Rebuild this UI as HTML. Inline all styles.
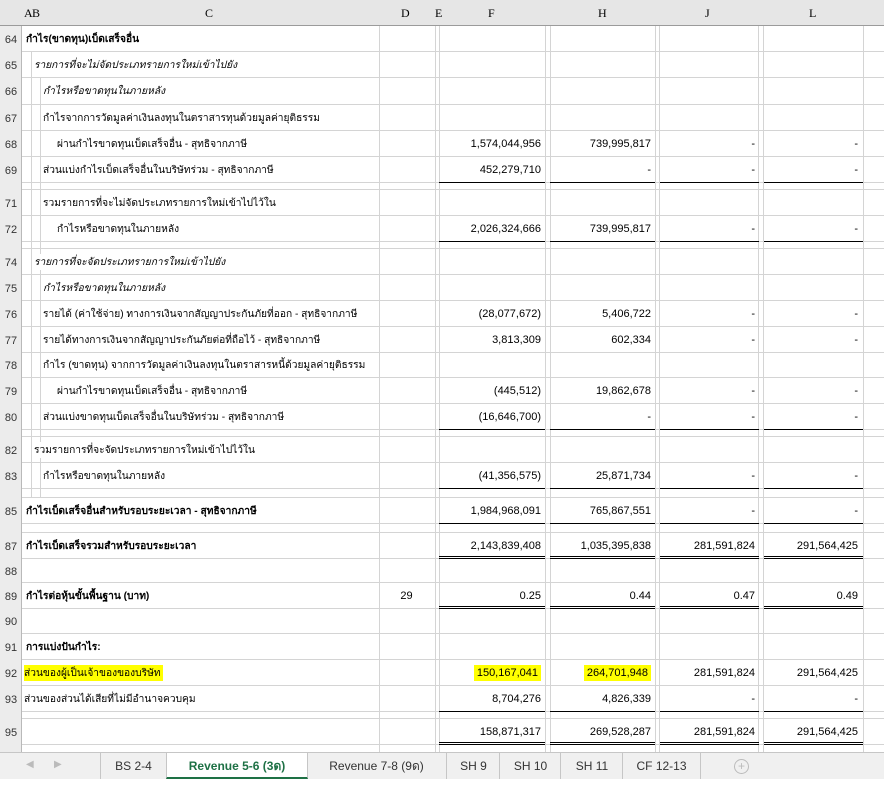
<!DOCTYPE html>
<html><head><meta charset="utf-8"><style>
body{margin:0;width:884px;height:790px;overflow:hidden;background:#fff;font-family:"Liberation Sans",Tahoma,sans-serif;font-size:11px;color:#000;position:relative}
.a{position:absolute}
.hdr{left:0;top:0;width:884px;height:25px;background:#e6e6e6;border-bottom:1px solid #9b9b9b;font-family:"Liberation Serif",serif;font-size:12px}
.hdr span{position:absolute;top:6px}
.rn{left:0;top:26px;width:21px;height:726px;background:#ececec;border-right:1px solid #b9b9b9}
.vl{position:absolute;top:26px;width:1px;background:#d4d4d4}
.r{position:absolute;left:22px;width:862px;border-bottom:1px solid #d4d4d4;box-sizing:border-box}
.n{position:absolute;left:-22px;width:22px;text-align:center;color:#333;font-size:11px;top:50%;margin-top:-5px}
.t{position:absolute;top:50%;margin-top:-8px;white-space:nowrap;background:#fff;padding-right:2px;font-size:10.2px}
.b{font-weight:bold}.i{font-style:italic}
.v{position:absolute;top:50%;margin-top:-6px;text-align:right;font-size:11px}
.F{left:417px;width:102px}.H{left:528px;width:101px}.J{left:638px;width:95px}.L{left:741px;width:95px}.D{left:357px;width:55px;text-align:center}
.u{position:absolute;bottom:-1px;height:0;border-bottom:1px solid #000}
.d{position:absolute;bottom:-1px;height:1px;border-top:1px solid #000;border-bottom:1px solid #000}
.uF{left:417px;width:106px}.uH{left:528px;width:105px}.uJ{left:638px;width:99px}.uL{left:742px;width:99px}
.hl{background:#ffff00}
.tabs{left:0;top:752px;width:884px;height:26px;background:#f0f0f0;border-top:1px solid #c6c6c6}
.tab{position:absolute;top:0;height:26px;line-height:26px;text-align:center;font-size:12px;color:#333;border-left:1px solid #c6c6c6}
</style></head><body>
<div class="a hdr">
<span style="left:24px">A</span><span style="left:32px">B</span><span style="left:205px">C</span><span style="left:401px">D</span><span style="left:435px">E</span><span style="left:488px">F</span><span style="left:598px">H</span><span style="left:705px">J</span><span style="left:809px">L</span>
</div>
<div class="a rn"></div>
<div class="vl" style="left:379px;height:726px"></div>
<div class="vl" style="left:435px;height:726px"></div>
<div class="vl" style="left:439px;height:726px"></div>
<div class="vl" style="left:545px;height:726px"></div>
<div class="vl" style="left:550px;height:726px"></div>
<div class="vl" style="left:655px;height:726px"></div>
<div class="vl" style="left:659px;height:726px"></div>
<div class="vl" style="left:758px;height:726px"></div>
<div class="vl" style="left:763px;height:726px"></div>
<div class="vl" style="left:863px;height:726px"></div>
<div class="vl" style="left:31px;top:52px;height:446px"></div>
<div class="vl" style="left:40px;top:78px;height:420px"></div>

<div class="r" style="top:26px;height:26px"><span class="n">64</span><span class="t b" style="left:4px">กำไร(ขาดทุน)เบ็ดเสร็จอื่น</span></div>
<div class="r" style="top:52px;height:26px"><span class="n">65</span><span class="t i" style="left:12px">รายการที่จะไม่จัดประเภทรายการใหม่เข้าไปยัง</span></div>
<div class="r" style="top:78px;height:27px"><span class="n">66</span><span class="t i" style="left:21px">กำไรหรือขาดทุนในภายหลัง</span></div>
<div class="r" style="top:105px;height:26px"><span class="n">67</span><span class="t" style="left:21px">กำไรจากการวัดมูลค่าเงินลงทุนในตราสารทุนด้วยมูลค่ายุติธรรม</span></div>
<div class="r" style="top:131px;height:26px"><span class="n">68</span><span class="t" style="left:35px">ผ่านกำไรขาดทุนเบ็ดเสร็จอื่น - สุทธิจากภาษี</span><span class="v F">1,574,044,956</span><span class="v H">739,995,817</span><span class="v J">-</span><span class="v L">-</span></div>
<div class="r" style="top:157px;height:26px"><span class="n">69</span><span class="t" style="left:21px">ส่วนแบ่งกำไรเบ็ดเสร็จอื่นในบริษัทร่วม - สุทธิจากภาษี</span><span class="v F">452,279,710</span><span class="v H">-</span><span class="v J">-</span><span class="v L">-</span><i class="u uF"></i><i class="u uH"></i><i class="u uJ"></i><i class="u uL"></i></div>
<div class="r" style="top:183px;height:7px"></div>
<div class="r" style="top:190px;height:26px"><span class="n">71</span><span class="t" style="left:21px">รวมรายการที่จะไม่จัดประเภทรายการใหม่เข้าไปไว้ใน</span></div>
<div class="r" style="top:216px;height:26px"><span class="n">72</span><span class="t" style="left:35px">กำไรหรือขาดทุนในภายหลัง</span><span class="v F">2,026,324,666</span><span class="v H">739,995,817</span><span class="v J">-</span><span class="v L">-</span><i class="u uF"></i><i class="u uH"></i><i class="u uJ"></i><i class="u uL"></i></div>
<div class="r" style="top:242px;height:7px"></div>
<div class="r" style="top:249px;height:26px"><span class="n">74</span><span class="t i" style="left:12px">รายการที่จะจัดประเภทรายการใหม่เข้าไปยัง</span></div>
<div class="r" style="top:275px;height:26px"><span class="n">75</span><span class="t i" style="left:21px">กำไรหรือขาดทุนในภายหลัง</span></div>
<div class="r" style="top:301px;height:26px"><span class="n">76</span><span class="t" style="left:21px">รายได้ (ค่าใช้จ่าย) ทางการเงินจากสัญญาประกันภัยที่ออก - สุทธิจากภาษี</span><span class="v F">(28,077,672)</span><span class="v H">5,406,722</span><span class="v J">-</span><span class="v L">-</span></div>
<div class="r" style="top:327px;height:26px"><span class="n">77</span><span class="t" style="left:21px">รายได้ทางการเงินจากสัญญาประกันภัยต่อที่ถือไว้ - สุทธิจากภาษี</span><span class="v F">3,813,309</span><span class="v H">602,334</span><span class="v J">-</span><span class="v L">-</span></div>
<div class="r" style="top:353px;height:25px"><span class="n">78</span><span class="t" style="left:21px">กำไร (ขาดทุน) จากการวัดมูลค่าเงินลงทุนในตราสารหนี้ด้วยมูลค่ายุติธรรม</span></div>
<div class="r" style="top:378px;height:26px"><span class="n">79</span><span class="t" style="left:35px">ผ่านกำไรขาดทุนเบ็ดเสร็จอื่น - สุทธิจากภาษี</span><span class="v F">(445,512)</span><span class="v H">19,862,678</span><span class="v J">-</span><span class="v L">-</span></div>
<div class="r" style="top:404px;height:26px"><span class="n">80</span><span class="t" style="left:21px">ส่วนแบ่งขาดทุนเบ็ดเสร็จอื่นในบริษัทร่วม - สุทธิจากภาษี</span><span class="v F">(16,646,700)</span><span class="v H">-</span><span class="v J">-</span><span class="v L">-</span><i class="u uF"></i><i class="u uH"></i><i class="u uJ"></i><i class="u uL"></i></div>
<div class="r" style="top:430px;height:7px"></div>
<div class="r" style="top:437px;height:26px"><span class="n">82</span><span class="t" style="left:12px">รวมรายการที่จะจัดประเภทรายการใหม่เข้าไปไว้ใน</span></div>
<div class="r" style="top:463px;height:26px"><span class="n">83</span><span class="t" style="left:21px">กำไรหรือขาดทุนในภายหลัง</span><span class="v F">(41,356,575)</span><span class="v H">25,871,734</span><span class="v J">-</span><span class="v L">-</span><i class="u uF"></i><i class="u uH"></i><i class="u uJ"></i><i class="u uL"></i></div>
<div class="r" style="top:489px;height:9px"></div>
<div class="r" style="top:498px;height:26px"><span class="n">85</span><span class="t b" style="left:4px">กำไรเบ็ดเสร็จอื่นสำหรับรอบระยะเวลา - สุทธิจากภาษี</span><span class="v F">1,984,968,091</span><span class="v H">765,867,551</span><span class="v J">-</span><span class="v L">-</span><i class="u uF"></i><i class="u uH"></i><i class="u uJ"></i><i class="u uL"></i></div>
<div class="r" style="top:524px;height:9px"></div>
<div class="r" style="top:533px;height:26px"><span class="n">87</span><span class="t b" style="left:4px">กำไรเบ็ดเสร็จรวมสำหรับรอบระยะเวลา</span><span class="v F">2,143,839,408</span><span class="v H">1,035,395,838</span><span class="v J">281,591,824</span><span class="v L">291,564,425</span><i class="d uF"></i><i class="d uH"></i><i class="d uJ"></i><i class="d uL"></i></div>
<div class="r" style="top:559px;height:24px"><span class="n">88</span></div>
<div class="r" style="top:583px;height:26px"><span class="n">89</span><span class="t b" style="left:4px">กำไรต่อหุ้นขั้นพื้นฐาน (บาท)</span><span class="v D">29</span><span class="v F">0.25</span><span class="v H">0.44</span><span class="v J">0.47</span><span class="v L">0.49</span><i class="d uF"></i><i class="d uH"></i><i class="d uJ"></i><i class="d uL"></i></div>
<div class="r" style="top:609px;height:25px"><span class="n">90</span></div>
<div class="r" style="top:634px;height:26px"><span class="n">91</span><span class="t b" style="left:4px">การแบ่งปันกำไร:</span></div>
<div class="r" style="top:660px;height:26px"><span class="n">92</span><span class="t hl" style="left:2px">ส่วนของผู้เป็นเจ้าของของบริษัท</span><span class="v F"><span class="hl" style="padding:2px 3px">150,167,041</span></span><span class="v H"><span class="hl" style="padding:2px 3px">264,701,948</span></span><span class="v J">281,591,824</span><span class="v L">291,564,425</span></div>
<div class="r" style="top:686px;height:26px"><span class="n">93</span><span class="t" style="left:2px">ส่วนของส่วนได้เสียที่ไม่มีอำนาจควบคุม</span><span class="v F">8,704,276</span><span class="v H">4,826,339</span><span class="v J">-</span><span class="v L">-</span><i class="u uF"></i><i class="u uH"></i><i class="u uJ"></i><i class="u uL"></i></div>
<div class="r" style="top:712px;height:7px"></div>
<div class="r" style="top:719px;height:26px"><span class="n">95</span><span class="v F">158,871,317</span><span class="v H">269,528,287</span><span class="v J">281,591,824</span><span class="v L">291,564,425</span><i class="d uF"></i><i class="d uH"></i><i class="d uJ"></i><i class="d uL"></i></div>

<div class="a tabs">
<span class="a" style="left:26px;top:6px;color:#bbb;font-size:10px">&#9664;</span><span class="a" style="left:54px;top:6px;color:#bbb;font-size:10px">&#9654;</span>
<div class="tab" style="left:100px;width:65px">BS 2-4</div>
<div class="tab" style="left:166px;width:140px;background:#fff;color:#1e7145;font-weight:bold;height:24px;border-bottom:2px solid #1e7145;border-right:1px solid #c6c6c6">Revenue 5-6 (3ด)</div>
<div class="tab" style="left:307px;width:139px;border-left:none">Revenue 7-8 (9ด)</div>
<div class="tab" style="left:446px;width:53px">SH 9</div>
<div class="tab" style="left:499px;width:61px">SH 10</div>
<div class="tab" style="left:560px;width:62px">SH 11</div>
<div class="tab" style="left:622px;width:77px;border-right:1px solid #c6c6c6">CF 12-13</div>
<div class="a" style="left:734px;top:6px;width:13px;height:13px;border:1px solid #bbb;border-radius:50%;color:#bbb;text-align:center;line-height:13px;font-size:12px">+</div>
</div>
</body></html>
